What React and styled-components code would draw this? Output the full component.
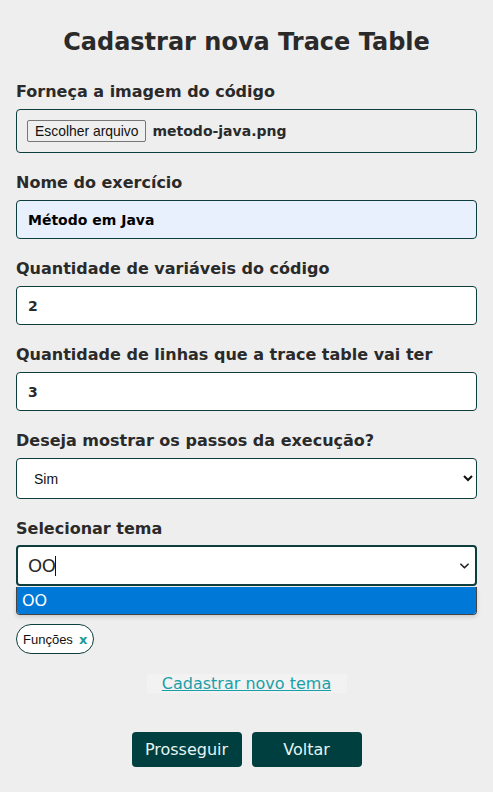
import React from 'react'
import styled, { createGlobalStyle } from 'styled-components'

const GlobalStyle = createGlobalStyle`
    * { box-sizing: border-box; }
    body {
        margin: 0;
        background-color: #eeeeee;
        font-family: "DejaVu Sans", Verdana, sans-serif;
        color: #2a2a2a;
    }
`;

export default function App() {
    return (
        <Page>
            <GlobalStyle />
            <Title>Cadastrar nova Trace Table</Title>
            <Form>
                <Field>
                    <Label>Forneça a imagem do código</Label>
                    <FileBox>
                        <FileButton type="button">Escolher arquivo</FileButton>
                        <FileName>metodo-java.png</FileName>
                    </FileBox>
                </Field>
                <Field>
                    <Label>Nome do exercício</Label>
                    <TextInput $autofill readOnly value="Método em Java" />
                </Field>
                <Field>
                    <Label>Quantidade de variáveis do código</Label>
                    <TextInput readOnly value="2" />
                </Field>
                <Field>
                    <Label>Quantidade de linhas que a trace table vai ter</Label>
                    <TextInput readOnly value="3" />
                </Field>
                <Field>
                    <Label>Deseja mostrar os passos da execução?</Label>
                    <Select defaultValue="sim">
                        <option value="sim">Sim</option>
                        <option value="nao">Não</option>
                    </Select>
                </Field>
                <Field>
                    <Label $tight>Selecionar tema</Label>
                    <Combo>
                        <ComboInput>
                            <span>OO</span>
                            <Caret />
                            <Chevron viewBox="0 0 10 6">
                                <path d="M1 1l4 4 4-4" fill="none" stroke="#222" strokeWidth="1.8" strokeLinecap="round" strokeLinejoin="round" />
                            </Chevron>
                        </ComboInput>
                        <Options>
                            <Option $active>OO</Option>
                        </Options>
                    </Combo>
                </Field>
                <Chips>
                    <Chip>Funções <ChipClose>x</ChipClose></Chip>
                </Chips>
                <LinkRow>
                    <NewTheme href="#">Cadastrar novo tema</NewTheme>
                </LinkRow>
                <Buttons>
                    <ActionButton type="button">Prosseguir</ActionButton>
                    <ActionButton type="button">Voltar</ActionButton>
                </Buttons>
            </Form>
        </Page>
    )
}

// styled components
const Page = styled.div`
    width: 100%;
    padding: 27px 16px 20px;
`;

const Title = styled.h1`
    margin: 0px 0px 25px;
    font-size: 24px;
    font-weight: 700;
    line-height: 30px;
    text-align: center;
    color: #2a2a2a;
`;

const Form = styled.form`
    display: flex;
    flex-flow: column nowrap;
    width: 100%;
`;

const Field = styled.div`
    display: flex;
    flex-flow: column nowrap;
    margin: 0px 0px 20px;
`;

const Label = styled.label`
    display: block;
    margin: 0px 0px ${({ $tight }) => $tight ? '6px' : '7px'};
    font-size: 16px;
    font-weight: 700;
    line-height: 20px;
    color: #2a2a2a;
`;

const FileBox = styled.div`
    display: flex;
    align-items: center;
    gap: 6px;
    height: 44px;
    padding: 0px 10px;
    border: 1px solid #0d3d3d;
    border-radius: 4px;
    background-color: #eeeeee;
`;

const FileButton = styled.button`
    height: 22px;
    padding: 0px 7px;
    border: 1px solid #767676;
    border-radius: 2px;
    background-color: #efefef;
    font-family: "Liberation Sans", Arial, sans-serif;
    font-size: 13.9px;
    color: #111;
`;

const FileName = styled.span`
    font-size: 14px;
    font-weight: 700;
    color: #2a2a2a;
`;

const TextInput = styled.input`
    width: 100%;
    height: 39px;
    padding: 0px 11px;
    border: 1px solid #0d3d3d;
    border-radius: 4px;
    background-color: ${({ $autofill }) => $autofill ? '#e8f0fe' : '#ffffff'};
    font-family: "DejaVu Sans", Verdana, sans-serif;
    font-size: 14px;
    font-weight: 700;
    color: ${({ $autofill }) => $autofill ? '#000000' : '#2a2a2a'};
    outline: none;
`;

const Select = styled.select`
    width: 100%;
    height: 41px;
    padding: 0px 13px;
    border: 1px solid #0d3d3d;
    border-radius: 4px;
    background-color: #ffffff;
    font-family: "Liberation Sans", Arial, sans-serif;
    font-size: 14px;
    color: #111;
    outline: none;
`;

const Combo = styled.div`
    position: relative;
    width: 100%;
`;

const ComboInput = styled.div`
    position: relative;
    display: flex;
    align-items: center;
    height: 41px;
    padding: 0px 10px;
    border: 2px solid #0d3d3d;
    border-radius: 4px;
    background-color: #ffffff;
    font-size: 18px;
    color: #2a2a2a;
    letter-spacing: -0.5px;
`;

const Caret = styled.span`
    display: inline-block;
    width: 1px;
    height: 20px;
    background-color: #111;
`;

const Chevron = styled.svg`
    position: absolute;
    right: 6px;
    top: 16px;
    width: 9px;
    height: 6px;
`;

const Options = styled.ul`
    position: absolute;
    left: 0px;
    right: 0px;
    top: 42px;
    margin: 0px;
    padding: 0px;
    list-style: none;
    border: 1px solid #444;
    border-top: none;
    border-radius: 0px 0px 4px 4px;
    overflow: hidden;
    box-shadow: 0px 2px 4px rgba(0,0,0,0.15);
`;

const Option = styled.li`
    height: 27px;
    padding: 0px 5px;
    background-color: ${({ $active }) => $active ? '#0078d7' : '#ffffff'};
    font-size: 16px;
    line-height: 27px;
    color: ${({ $active }) => $active ? '#ffffff' : '#111'};
`;

const Chips = styled.div`
    display: flex;
    gap: 6px;
    margin: 18px 0px 0px;
`;

const Chip = styled.span`
    display: inline-flex;
    align-items: center;
    gap: 6px;
    height: 30px;
    padding: 0px 6px;
    border: 1px solid #0d3d3d;
    border-radius: 15px;
    background-color: #ffffff;
    font-family: "Liberation Sans", Arial, sans-serif;
    font-size: 13px;
    color: #111;
`;

const ChipClose = styled.span`
    font-family: "DejaVu Sans", Verdana, sans-serif;
    font-size: 13px;
    font-weight: 700;
    color: #1a9a9a;
`;

const LinkRow = styled.div`
    display: flex;
    justify-content: center;
    margin: 20px 0px 0px;
`;

const NewTheme = styled.a`
    display: block;
    width: 200px;
    height: 19px;
    background-color: #f2f2f2;
    font-size: 16px;
    line-height: 19px;
    text-align: center;
    color: #1a9fa8;
    text-decoration: underline;
`;

const Buttons = styled.div`
    display: flex;
    justify-content: center;
    gap: 10px;
    margin: 39px 0px 0px;
`;

const ActionButton = styled.button`
    width: 110px;
    height: 35px;
    border: none;
    border-radius: 4px;
    background-color: #003f3f;
    font-family: "DejaVu Sans", Verdana, sans-serif;
    font-size: 16px;
    color: #e6f4f4;
    cursor: pointer;
`;
